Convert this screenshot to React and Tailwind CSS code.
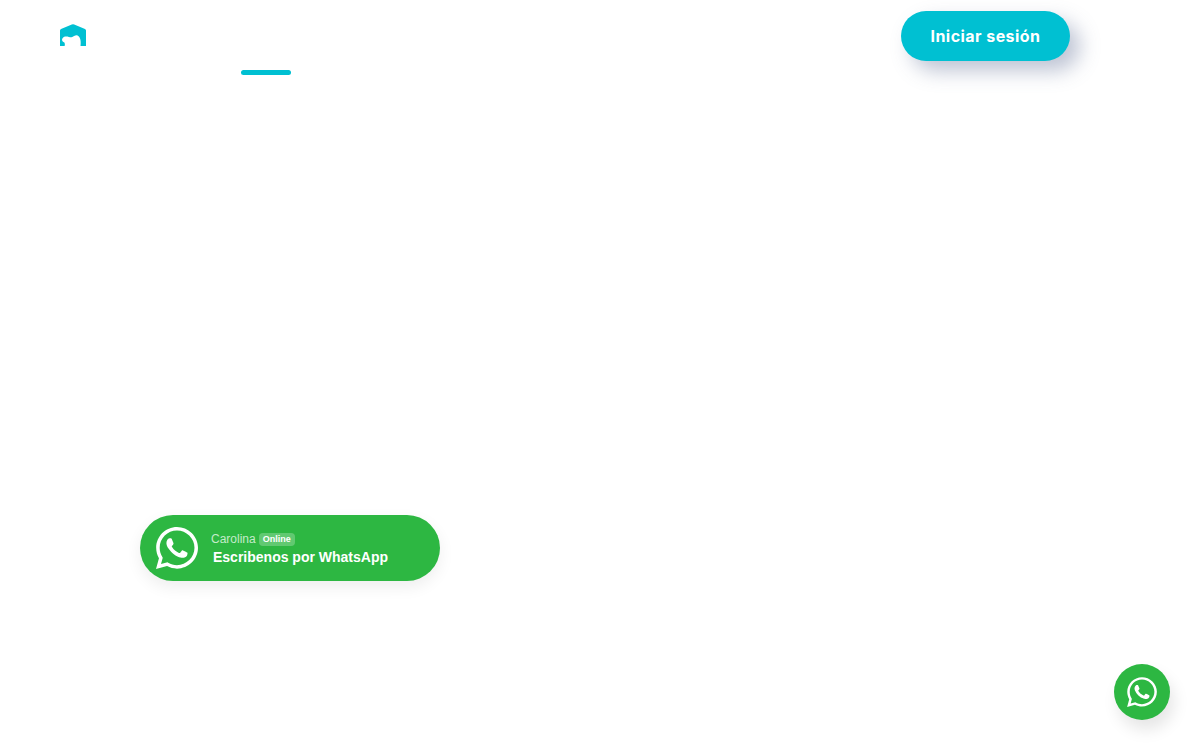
import React from 'react';
import { FaWhatsapp } from 'react-icons/fa';

const Logo = () => (
  <svg width="26" height="22" viewBox="0 0 26 22" className="block">
    <path
      fill="#00c0d2"
      d="M11.8 .5 Q13 0 14.2 .5 L25 5 Q26 5.5 26 6.5 V22 H20.5 C21 18 20.8 13 17.5 11.5 C15.5 10.7 13.5 13 11.5 13.2 C9.5 13.4 6.5 11.6 3.8 13 C1.2 14.6 1.6 17.6 4.4 18.4 C5 19.6 5 21 4.6 22 H0 V6.5 Q0 5.5 1 5 Z"
    />
  </svg>
);

const App = () => {
  return (
    <div className="relative h-[750px] overflow-hidden bg-white font-['Liberation_Sans',sans-serif]">
      <header className="flex items-start pl-[60px] pr-[130px]">
        <div className="mt-[24px]">
          <Logo />
        </div>
        <nav className="ml-[155px] flex h-[75px] w-[50px] items-end">
          <div className="h-[5px] w-full rounded-full bg-[#00c0d2]"></div>
        </nav>
        <button className="ml-auto mt-[11px] h-[50px] w-[169px] rounded-[25px] bg-[#00c0d2] pb-[1px] font-['Inter',sans-serif] text-[16px] font-bold tracking-[0.45px] text-white shadow-[10px_10px_20px_rgba(110,125,160,0.45)]">
          Iniciar sesión
        </button>
      </header>

      <main className="pl-[140px] pt-[440px]">
        <a className="flex h-[66px] w-[300px] items-center rounded-[33px] bg-[#2db742] pl-[13px] shadow-[0_6px_16px_rgba(0,0,0,0.07)]">
          <FaWhatsapp className="text-[48px] text-white" />
          <div className="ml-[10px] text-white">
            <div className="mt-[1px] flex items-center text-[12px] leading-[14px] text-[#c4ebc9]">
              Carolina
              <span className="ml-[3px] rounded-[4px] bg-white/25 px-[4px] text-[9px] font-bold leading-[13px] text-white">
                Online
              </span>
            </div>
            <div className="ml-[2px] mt-[3px] text-[14px] font-bold leading-[16px]">Escribenos por WhatsApp</div>
          </div>
        </a>
      </main>

      <a className="absolute left-[1114px] top-[664px] flex h-[56px] w-[56px] items-center justify-center rounded-full bg-[#2db742] shadow-[4px_10px_16px_rgba(0,0,0,0.1)]">
        <FaWhatsapp className="text-[34px] text-white" />
      </a>
    </div>
  );
};

export default App;
